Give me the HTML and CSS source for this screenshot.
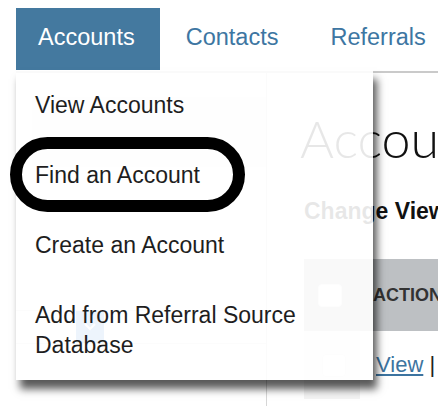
FILE: index.html
```html
<!DOCTYPE html>
<html lang="en">
<head>
    <meta charset="UTF-8">
    <meta name="viewport" content="width=device-width, initial-scale=1.0">
    <title>Accounts</title>
    <link rel="stylesheet" href="styles.css">
</head>
<body>
    <div class="page">
        <nav class="topnav">
            <div class="nav-item">
                <a class="nav-link active" href="#">Accounts</a>
                <ul class="dropdown">
                    <li><a href="#">View Accounts</a></li>
                    <li><a href="#">Find an Account</a></li>
                    <li><a href="#">Create an Account</a></li>
                    <li><a href="#">Add from Referral Source Database</a></li>
                </ul>
            </div>
            <a class="nav-link" href="#">Contacts</a>
            <a class="nav-link" href="#">Referrals</a>
        </nav>

        <div class="content">
            <aside class="sidebar">
                <div class="sidebar-head"></div>
                <div class="sidebar-row">
                    <span class="toggle">
                        <svg width="14" height="10" viewBox="0 0 14 10">
                            <path d="M2 2 L7 7 L12 2" fill="none" stroke="#fff" stroke-width="2"/>
                        </svg>
                    </span>
                </div>
            </aside>

            <main class="main">
                <h1>Accounts</h1>
                <h3>Change View</h3>

                <div class="grid">
                    <div class="grid-head">
                        <div class="cell-check"><span class="checkbox"></span></div>
                        <div class="cell-action">ACTION</div>
                    </div>
                    <div class="grid-row">
                        <div class="cell-check"><span class="checkbox"></span></div>
                        <div class="cell-links"><a href="#">View</a> |</div>
                    </div>
                </div>
            </main>
        </div>

        <!-- hand drawn highlight round the menu item -->
        <div class="highlight-ring"></div>
    </div>
</body>
</html>
```

FILE: styles.css
```css
* {
    box-sizing: border-box;
    font-family: 'Liberation Sans', Arial, sans-serif;
}

html, body {
    overflow: hidden;
}

body {
    background-color: #fff;
    margin: 0;
    padding: 0;
}

.page {
    position: relative;
    padding-top: 8px;
    width: 1000px;
}

.topnav {
    display: flex;
    margin-left: 16px;
    padding-bottom: 1px;
    border-bottom: 2px solid #cacaca;
}

.nav-item {
    position: relative;
}

.nav-link {
    display: block;
    height: 62px;
    line-height: 58px;
    padding: 0 26px 4px;
    font-size: 23.5px;
    color: #3d76a2;
    text-decoration: none;
}

.nav-link.active {
    background-color: #44799f;
    color: #fff;
    padding-left: 22px;
    padding-right: 25px;
}

.dropdown {
    position: absolute;
    top: 62px;
    left: 0;
    z-index: 5;
    width: 357px;
    margin: 0;
    padding: 0;
    list-style: none;
    background-color: rgba(255, 255, 255, 0.9);
    box-shadow: 4px 9px 8px rgba(0, 0, 0, 0.65);
}

.dropdown li a {
    display: block;
    padding: 20px 19px;
    font-size: 23px;
    line-height: 30px;
    color: #1e1e1e;
    text-decoration: none;
}

.highlight-ring {
    position: absolute;
    left: 10px;
    top: 137px;
    z-index: 6;
    width: 235px;
    height: 75px;
    border: 12px solid #000;
    border-radius: 38px;
}

.content {
    display: flex;
    margin-left: 16px;
}

.sidebar {
    width: 251px;
    min-height: 340px;
    border-right: 1px solid #d6d6d6;
    padding-left: 16px;
}

.sidebar-head {
    margin-top: 24px;
    height: 70px;
    background-color: #eeeeee;
}

.sidebar-row {
    margin-top: 143px;
    margin-left: -16px;
    height: 34px;
    border-top: 1px solid #dddddd;
    border-bottom: 1px solid #dddddd;
    padding-left: 60px;
}

.toggle {
    display: flex;
    align-items: center;
    justify-content: center;
    width: 28px;
    height: 32px;
    background-color: #4a8fe0;
}

.main {
    flex: 1;
    padding-left: 33px;
}

h1 {
    margin: 34px 0 0;
    font-family: 'Lato', sans-serif;
    font-weight: 300;
    font-size: 52px;
    line-height: 62px;
    color: #111;
}

h3 {
    margin: 28px 0 0 4px;
    font-size: 23px;
    line-height: 28px;
    font-weight: bold;
    color: #111;
}

.grid {
    margin: 34px 0 0 4px;
}

.grid-head {
    display: flex;
    height: 72px;
    background-color: #bdc0c3;
}

.grid-row {
    display: flex;
    height: 68px;
}

.cell-check {
    width: 56px;
    display: flex;
    align-items: center;
    padding-left: 14px;
}

.grid-row .cell-check {
    padding-left: 18px;
    background-color: #f3f3f3;
}

.checkbox {
    display: block;
    width: 24px;
    height: 23px;
    background-color: #fff;
    border: 1px solid #e6e6e6;
    border-radius: 4px;
}

.cell-action {
    padding-left: 13px;
    line-height: 72px;
    font-size: 18px;
    font-weight: bold;
    color: #333;
}

.cell-links {
    padding-left: 16px;
    line-height: 68px;
    font-size: 22px;
    color: #222;
}

.cell-links a {
    color: #3d74a0;
}
```
